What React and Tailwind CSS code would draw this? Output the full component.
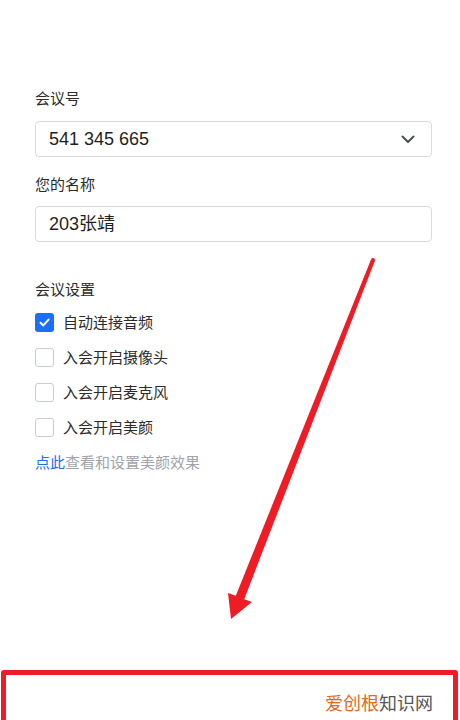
import React from "react";

const FONT = { fontFamily: '"Liberation Sans", "Noto Sans CJK SC", sans-serif' };

function Check({ checked, label }) {
  return (
    <div className="flex items-center h-[35px]">
      {checked ? (
        <div className="w-[19px] h-[19px] rounded-[3px] bg-[#1a6ff5] flex items-center justify-center">
          <svg width="13" height="13" viewBox="0 0 13 13" fill="none">
            <path d="M2.5 6.8 L5.3 9.4 L10.6 3.6" stroke="white" strokeWidth="2" strokeLinecap="round" strokeLinejoin="round" />
          </svg>
        </div>
      ) : (
        <div className="w-[19px] h-[19px] rounded-[3px] border border-[#c9ccd2] bg-white" />
      )}
      <span className="ml-[9px] text-[15px] leading-[20px] text-[#2b2b2b]">{label}</span>
    </div>
  );
}

export default function App() {
  return (
    <div className="relative w-[460px] h-[720px] overflow-hidden bg-white flex flex-col" style={FONT}>
      <div className="pl-[35px] pr-[28px] pt-[89px] flex flex-col">
        <div className="text-[15px] leading-[20px] text-[#2b2b2b]">会议号</div>
        <div className="mt-[12px] h-[36px] rounded-[4px] border border-[#d9dbe0] flex items-center pl-[13px] pr-[16px]">
          <span className="text-[18px] leading-[24px] text-[#1f1f1f]">541 345 665</span>
          <svg className="ml-auto" width="14" height="9" viewBox="0 0 14 9" fill="none">
            <path d="M1.5 1.5 L7 7 L12.5 1.5" stroke="#4a4d55" strokeWidth="2" strokeLinecap="round" strokeLinejoin="round" />
          </svg>
        </div>
        <div className="mt-[18px] text-[15px] leading-[20px] text-[#2b2b2b]">您的名称</div>
        <div className="mt-[11px] h-[36px] rounded-[4px] border border-[#d9dbe0] flex items-center pl-[13px]">
          <span className="text-[18px] leading-[24px] text-[#1f1f1f]">203张靖</span>
        </div>
        <div className="mt-[38px] text-[15px] leading-[20px] text-[#2b2b2b]">会议设置</div>
        <div className="mt-[5px] flex flex-col">
          <Check checked label="自动连接音频" />
          <Check label="入会开启摄像头" />
          <Check label="入会开启麦克风" />
          <Check label="入会开启美颜" />
        </div>
        <div className="mt-[8px] text-[15px] leading-[20px] text-[#a0a3aa]">
          <span className="text-[#1a6ff5]">点此</span>查看和设置美颜效果
        </div>
      </div>

      <div className="mt-auto shrink-0 h-[60px] -mb-[10px] ml-[1px] w-[457px] border-[5px] border-[#ee1c25] rounded-[3px] flex justify-end pt-[15px] pr-[20px]">
        <span className="text-[18px] leading-[24px] h-[24px]" style={{ fontFamily: '"Noto Sans CJK SC", sans-serif' }}>
          <span className="text-[#e2691f]">爱创根</span>
          <span className="text-[#555555]">知识网</span>
        </span>
      </div>

      <svg className="absolute left-0 top-0 pointer-events-none" width="460" height="720" viewBox="0 0 460 720">
        <polygon
          fill="#ee1c25"
          points="374.9,260.7 244.2,599.2 252,602 231,619 228,593 235.8,595.8 371.1,259.3"
        />
        <circle cx="373" cy="260" r="2" fill="#ee1c25" />
      </svg>
    </div>
  );
}
